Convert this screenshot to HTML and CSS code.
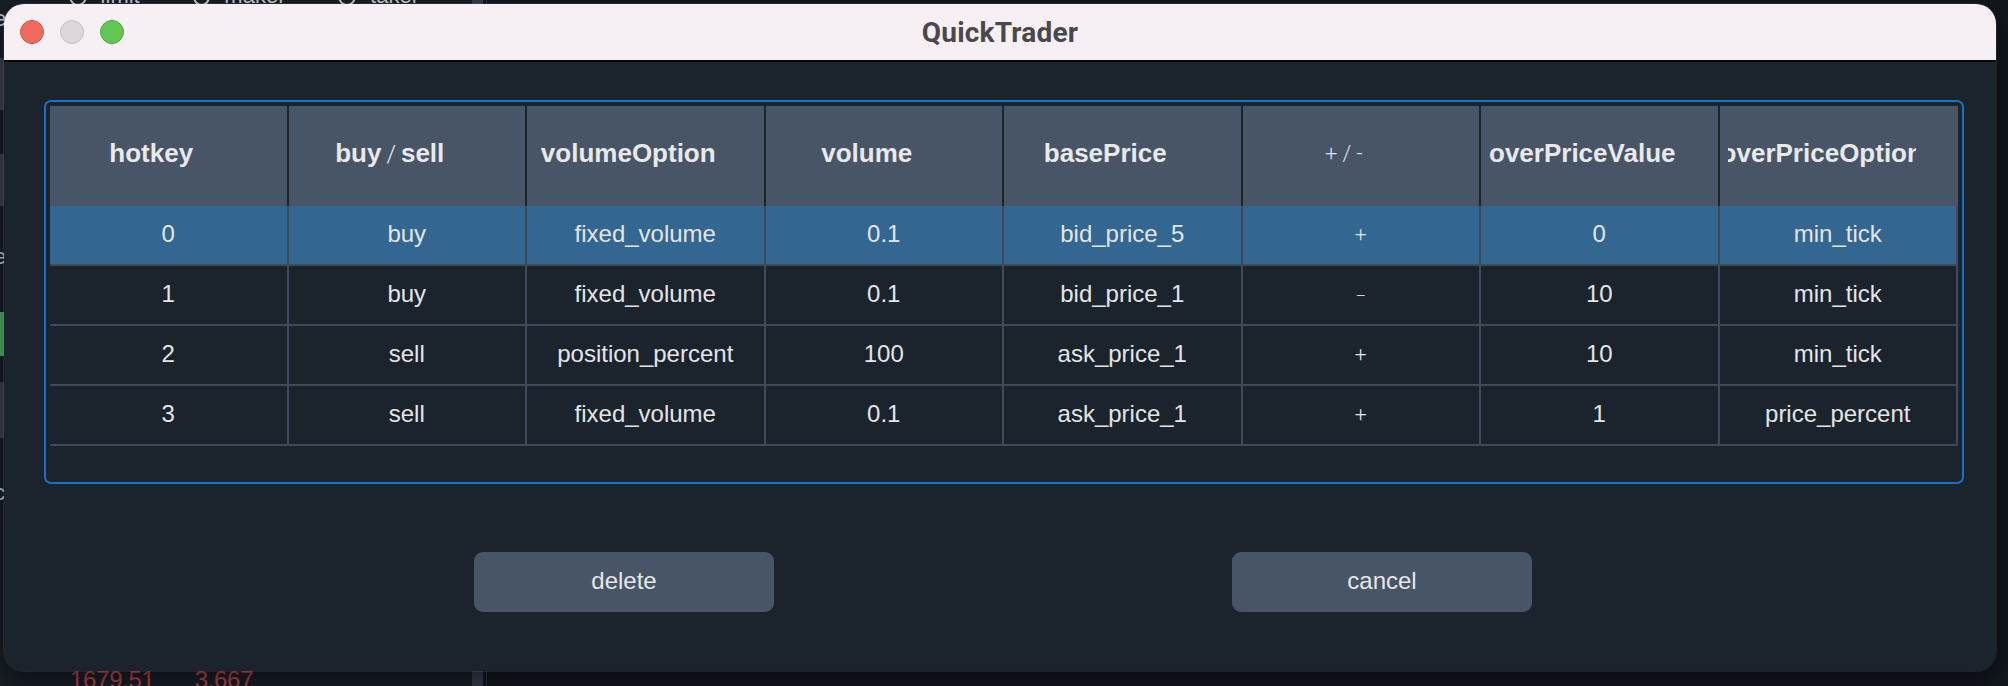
FILE: index.html
```html
<!DOCTYPE html>
<html>
<head>
<meta charset="utf-8">
<title>QuickTrader</title>
<link rel="stylesheet" href="styles.css">
</head>
<body>
<div class="desktop">
  <div class="left-pane">
    <div class="radio-row">
      <span class="radio"></span><span class="radio-label">limit</span>
      <span class="radio"></span><span class="radio-label">maker</span>
      <span class="radio"></span><span class="radio-label">taker</span>
    </div>
    <div class="side-slivers">
      <span class="sliver s-text">e</span>
      <span class="sliver s-gray s1"></span>
      <span class="sliver s-gray s2"></span>
      <span class="sliver s-text s3">e</span>
      <span class="sliver s-green"></span>
      <span class="sliver s-gray s4"></span>
      <span class="sliver s-text s5">c</span>
    </div>
    <div class="price-row">
      <span class="price">1679.51</span>
      <span class="price">3.667</span>
    </div>
  </div>
  <div class="pane-bar"></div>
  <div class="pane-line"></div>
  <div class="right-pane"></div>

  <div class="window">
    <div class="titlebar">
      <div class="lights">
        <span class="light red"></span>
        <span class="light gray"></span>
        <span class="light green"></span>
      </div>
      <div class="title">QuickTrader</div>
      <div class="title-spacer"></div>
    </div>
    <div class="content">
      <div class="table-box">
        <div class="table">
          <div class="row head">
            <div class="hcell"><div class="hclip"><span>hotkey</span></div></div>
            <div class="hcell"><div class="hclip"><span>buy<span class="thin-slash">/</span>sell</span></div></div>
            <div class="hcell"><div class="hclip"><span>volumeOption</span></div></div>
            <div class="hcell"><div class="hclip"><span>volume</span></div></div>
            <div class="hcell"><div class="hclip"><span>basePrice</span></div></div>
            <div class="hcell"><div class="hclip"><span class="thin-head">+/-</span></div></div>
            <div class="hcell"><div class="hclip"><span>overPriceValue</span></div></div>
            <div class="hcell last"><div class="hclip"><span>overPriceOption</span></div></div>
          </div>
          <div class="row body selected">
            <div class="cell">0</div>
            <div class="cell">buy</div>
            <div class="cell">fixed_volume</div>
            <div class="cell">0.1</div>
            <div class="cell">bid_price_5</div>
            <div class="cell thin">+</div>
            <div class="cell">0</div>
            <div class="cell">min_tick</div>
          </div>
          <div class="row body">
            <div class="cell">1</div>
            <div class="cell">buy</div>
            <div class="cell">fixed_volume</div>
            <div class="cell">0.1</div>
            <div class="cell">bid_price_1</div>
            <div class="cell thin minus">–</div>
            <div class="cell">10</div>
            <div class="cell">min_tick</div>
          </div>
          <div class="row body">
            <div class="cell">2</div>
            <div class="cell">sell</div>
            <div class="cell">position_percent</div>
            <div class="cell">100</div>
            <div class="cell">ask_price_1</div>
            <div class="cell thin">+</div>
            <div class="cell">10</div>
            <div class="cell">min_tick</div>
          </div>
          <div class="row body">
            <div class="cell">3</div>
            <div class="cell">sell</div>
            <div class="cell">fixed_volume</div>
            <div class="cell">0.1</div>
            <div class="cell">ask_price_1</div>
            <div class="cell thin">+</div>
            <div class="cell">1</div>
            <div class="cell">price_percent</div>
          </div>
        </div>
      </div>
      <div class="actions">
        <button class="btn">delete</button>
        <button class="btn">cancel</button>
      </div>
    </div>
  </div>
</div>
</body>
</html>
```

FILE: styles.css
```css
* { box-sizing: border-box; }

html, body {
  margin: 0;
  padding: 0;
  background: #12171e;
}

.desktop {
  position: relative;
  width: 2008px;
  height: 686px;
  overflow: hidden;
  display: flex;
  background: #12171e;
  font-family: "Liberation Sans", Arial, sans-serif;
}

/* ---------- backdrop (app behind the dialog) ---------- */
.left-pane {
  position: relative;
  width: 472px;
  height: 686px;
  background: #181e27;
  display: flex;
  flex-direction: column;
}

.radio-row {
  display: flex;
  align-items: center;
  margin-top: -16px;
  padding-left: 69px;
  height: 24px;
  color: #c9ced6;
  font-size: 22px;
}
.radio {
  width: 20px;
  height: 20px;
  border: 2px solid #c9ced6;
  border-radius: 50%;
  margin-right: 14px;
}
.radio-label { margin-right: 53px; }

.side-slivers {
  display: flex;
  flex-direction: column;
  width: 10px;
  margin-left: -6px;
}
.sliver { display: block; }
.s-text { color: #c9ced6; font-size: 22px; line-height: 22px; height: 22px; }
.s-gray { background: #3a414c; }
.s1 { height: 52px; margin-top: 28px; }
.s2 { height: 52px; margin-top: 44px; }
.s3 { margin-top: 40px; }
.s-green { background: #4caf63; height: 44px; margin-top: 44px; }
.s4 { height: 56px; margin-top: 26px; }
.s5 { margin-top: 44px; }

.price-row {
  margin-top: auto;
  margin-bottom: -6px;
  display: flex;
  gap: 40px;
  padding-left: 70px;
  height: 24px;
  line-height: 24px;
  font-size: 24px;
  color: #b8434a;
  letter-spacing: -0.3px;
}

.pane-bar {
  width: 11px;
  background: #353d49;
}
.pane-line {
  width: 4px;
  border-right: 1px solid #2c333d;
}
.right-pane {
  flex: 1;
  background: #12171e;
}

/* ---------- dialog window ---------- */
.window {
  position: absolute;
  left: 4px;
  top: 4px;
  width: 1992px;
  height: 667px;
  border-radius: 20px;
  overflow: hidden;
  background: #1b232d;
  box-shadow: 0 0 0 1px rgba(255, 255, 255, 0.08), 0 10px 30px rgba(0, 0, 0, 0.5);
  display: flex;
  flex-direction: column;
}

.titlebar {
  height: 58px;
  flex: none;
  background: #f6f0f4;
  border-bottom: 2px solid #050608;
  display: grid;
  grid-template-columns: 1fr auto 1fr;
  align-items: center;
}

.lights {
  display: flex;
  gap: 16px;
  padding-left: 16px;
}
.light {
  width: 24px;
  height: 24px;
  border-radius: 50%;
  display: block;
}
.light.red { background: #ee6a5e; border: 1px solid #d4574c; }
.light.gray { background: #ddd8dd; border: 1px solid #c6c0c6; }
.light.green { background: #62c655; border: 1px solid #4eab42; }

.title {
  font-family: Roboto, "Liberation Sans", sans-serif;
  font-weight: 700;
  font-size: 28px;
  color: #4a484c;
  letter-spacing: 0.2px;
}

.content {
  flex: 1;
  padding: 38px 32px 0 40px;
  display: flex;
  flex-direction: column;
}

.table-box {
  border: 2px solid #1a70c4;
  border-radius: 7px;
  padding: 4px 4px 36px 4px;
}

.table {
  display: flex;
  flex-direction: column;
}

.row {
  display: grid;
  grid-template-columns: repeat(8, 1fr);
}

.row.head {
  height: 100px;
  background: #475567;
}

.hcell {
  display: flex;
  align-items: center;
  padding: 0 42px 6px 8px;
  border-right: 2px solid #1b232d;
  min-width: 0;
}
.hcell.last { border-right: none; }

.hclip {
  width: 100%;
  overflow: hidden;
  display: flex;
  justify-content: center;
}
.hclip > span {
  flex: none;
  white-space: nowrap;
  font-weight: 700;
  font-size: 26px;
  color: #e9e9eb;
}

.thin-slash {
  font-family: Roboto, "Liberation Sans", sans-serif;
  font-weight: 300;
  font-size: 24px;
  margin: 0 5px;
}

.hclip > span.thin-head {
  font-family: Roboto, "Liberation Sans", sans-serif;
  font-weight: 300;
  font-size: 22px;
  letter-spacing: 5px;
  padding-left: 5px;
  color: #dde0e5;
}

.row.body {
  height: 60px;
  border-bottom: 2px solid #3e4a5a;
}
.row.body.selected { background: #336691; }

.cell {
  display: flex;
  align-items: center;
  justify-content: center;
  padding-bottom: 3px;
  border-right: 2px solid #3e4a5a;
  font-size: 24px;
  color: #e4e5e7;
  white-space: nowrap;
  min-width: 0;
}

.cell.thin {
  font-family: Roboto, "Liberation Sans", sans-serif;
  font-weight: 300;
  font-size: 21px;
  color: #e0e3e7;
}
.cell.minus { padding-top: 6px; font-size: 16px; }

.actions {
  margin-top: 68px;
  display: flex;
  justify-content: center;
  gap: 458px;
  padding-right: 2px;
}

.btn {
  width: 300px;
  height: 60px;
  border: none;
  border-radius: 9px;
  background: #475567;
  color: #e6e7e9;
  font-family: "Liberation Sans", Arial, sans-serif;
  font-size: 24px;
  padding: 0 0 2px 0;
}
```
